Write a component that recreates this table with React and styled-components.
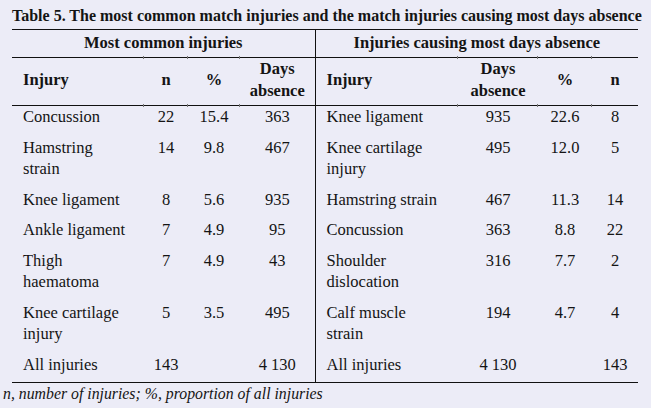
import React from "react";
import styled, { createGlobalStyle } from "styled-components";

const serif = `"Liberation Serif", "Times New Roman", serif`;

const GlobalStyle = createGlobalStyle`
  html, body {
    margin: 0;
    padding: 0;
    background: #ececf7;
  }
  body {
    font-family: ${serif};
    color: #141414;
  }
`;

const Page = styled.div`
  width: 651px;
  height: 408px;
  padding: 5px 0 0 3px;
  box-sizing: border-box;
  background: #ececf7;
  color: #141414;
  font-family: ${serif};
`;

const Title = styled.div`
  margin: 0 0 2px 9px;
  font-size: 16px;
  line-height: 22px;
  font-weight: bold;
  white-space: nowrap;
`;

const Table = styled.table`
  margin-left: 9px;
  width: 626px;
  border-collapse: collapse;
  table-layout: fixed;
  font-family: ${serif};
  font-size: 16.5px;
  color: #141414;
  border-top: 1px solid #111;
  border-bottom: 1px solid #111;
`;

const GroupCell = styled.th`
  padding: 2px 0 3px;
  line-height: 22px;
  font-weight: bold;
  text-align: center;
  border-bottom: 1px solid #111;
  border-right: ${(p) => (p.$divider ? "1px solid #111" : "none")};
`;

const HeadCell = styled.th`
  position: relative;
  padding: 0 0 3px ${(p) => (p.$left ? "11px" : "0")};
  height: 47px;
  box-sizing: border-box;
  line-height: 22px;
  font-weight: bold;
  text-align: ${(p) => (p.$left ? "left" : "center")};
  vertical-align: middle;
  border-bottom: 1px solid #111;
  border-right: ${(p) => (p.$divider ? "1px solid #111" : "none")};

  &::before,
  &::after {
    content: ${(p) => (p.$tick ? '""' : "none")};
    position: absolute;
    left: -1px;
    width: 1px;
    height: 3px;
    background: #777;
  }
  &::before {
    top: -2px;
  }
  &::after {
    bottom: -2px;
  }
`;

const Cell = styled.td`
  padding: 0 0 ${(p) => (p.$last ? "7px" : "9px")} ${(p) => (p.$left ? "11px" : "0")};
  line-height: 21.5px;
  text-align: ${(p) => (p.$left ? "left" : "center")};
  vertical-align: top;
  white-space: pre-line;
  border-right: ${(p) => (p.$divider ? "1px solid #111" : "none")};
`;

const Note = styled.div`
  font-size: 15.8px;
  line-height: 22px;
  font-style: italic;
`;

const rows = [
  ["Concussion", "22", "15.4", "363", "Knee ligament", "935", "22.6", "8"],
  ["Hamstring\nstrain", "14", "9.8", "467", "Knee cartilage\ninjury", "495", "12.0", "5"],
  ["Knee ligament", "8", "5.6", "935", "Hamstring strain", "467", "11.3", "14"],
  ["Ankle ligament", "7", "4.9", "95", "Concussion", "363", "8.8", "22"],
  ["Thigh\nhaematoma", "7", "4.9", "43", "Shoulder\ndislocation", "316", "7.7", "2"],
  ["Knee cartilage\ninjury", "5", "3.5", "495", "Calf muscle\nstrain", "194", "4.7", "4"],
  ["All injuries", "143", "", "4 130", "All injuries", "4 130", "", "143"],
];

const widths = [132, 44, 52, 75, 143, 80, 54, 46];

export default function App() {
  return (
    <Page>
      <GlobalStyle />
      <Title>
        Table 5. The most common match injuries and the match injuries causing most days absence
      </Title>
      <Table>
        <colgroup>
          {widths.map((w, i) => (
            <col key={i} style={{ width: w }} />
          ))}
        </colgroup>
        <thead>
          <tr>
            <GroupCell colSpan={4} $divider>
              Most common injuries
            </GroupCell>
            <GroupCell colSpan={4}>Injuries causing most days absence</GroupCell>
          </tr>
          <tr>
            <HeadCell $left>Injury</HeadCell>
            <HeadCell $tick>n</HeadCell>
            <HeadCell $tick>%</HeadCell>
            <HeadCell $tick $divider>
              Days
              <br />
              absence
            </HeadCell>
            <HeadCell $left>Injury</HeadCell>
            <HeadCell $tick>
              Days
              <br />
              absence
            </HeadCell>
            <HeadCell $tick>%</HeadCell>
            <HeadCell $tick>n</HeadCell>
          </tr>
        </thead>
        <tbody>
          {rows.map((r, ri) => (
            <tr key={ri}>
              {r.map((v, ci) => (
                <Cell
                  key={ci}
                  $left={ci === 0 || ci === 4}
                  $divider={ci === 3}
                  $last={ri === rows.length - 1}
                >
                  {v}
                </Cell>
              ))}
            </tr>
          ))}
        </tbody>
      </Table>
      <Note>n, number of injuries; %, proportion of all injuries</Note>
    </Page>
  );
}
